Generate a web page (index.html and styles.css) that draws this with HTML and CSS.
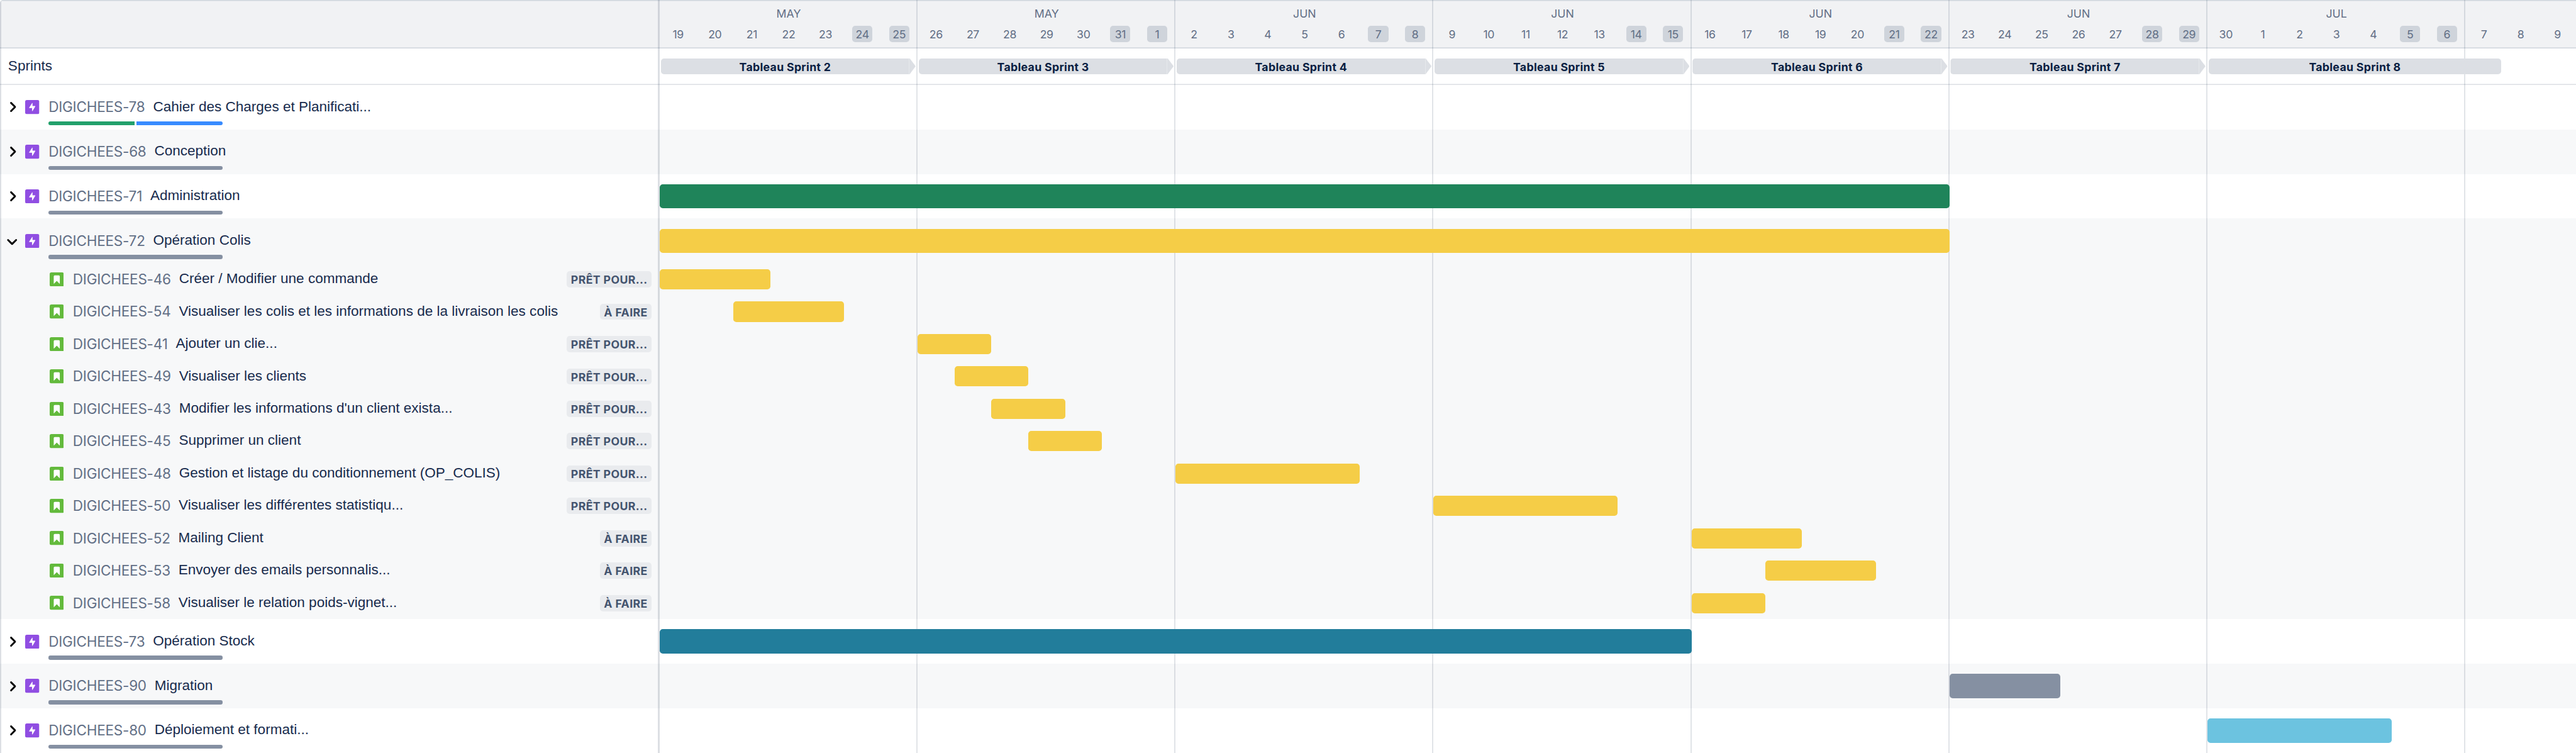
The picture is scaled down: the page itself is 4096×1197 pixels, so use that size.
FILE: index.html
```
<!DOCTYPE html>
<html lang="fr">
<head>
<meta charset="utf-8">
<title>Chronologie</title>
<link rel="stylesheet" href="styles.css">
</head>
<body>
<svg class="sprite" aria-hidden="true">
  <symbol id="epic" viewBox="0 0 14 14"><rect width="14" height="14" rx="1.700" fill="#904ee2"/><path d="M7.300 3.300v2.600h2.300c.4 0 .5.300.3.600L7.400 10.700c-.2.300-.6.300-.6-.1V8H4.300c-.4 0-.5-.300-.3-.600L6.700 3.200c.2-.3.600-.3.600.1z" fill="#fff"/></symbol>
  <symbol id="story" viewBox="0 0 14 14"><rect width="14" height="14" rx="1.700" fill="#63ba3c"/><path d="M4 10.900V4a1 1 0 0 1 1-1h4a1 1 0 0 1 1 1v6.900c0 .300-.2.300-.4.100L7 8.400 4.400 11c-.2.200-.4.200-.4-.1z" fill="#fff"/></symbol>
  <symbol id="chevron" viewBox="0 0 6 10"><path d="M1 1l4 4-4 4" fill="none" stroke="#000" stroke-width="1.800" stroke-linecap="round" stroke-linejoin="round"/></symbol>
</svg>
<main class="roadmap">
  <div class="lines"><i></i><i></i><i></i><i></i><i></i><i></i><i></i><i></i></div>
  <header class="row head">
    <div class="side"></div>
    <div class="weeks">
      <div class="week"><span class="month">MAY</span><div class="days"><b>19</b><b>20</b><b>21</b><b>22</b><b>23</b><b class="off">24</b><b class="off">25</b></div></div>
      <div class="week"><span class="month">MAY</span><div class="days"><b>26</b><b>27</b><b>28</b><b>29</b><b>30</b><b class="off">31</b><b class="off">1</b></div></div>
      <div class="week"><span class="month">JUN</span><div class="days"><b>2</b><b>3</b><b>4</b><b>5</b><b>6</b><b class="off">7</b><b class="off">8</b></div></div>
      <div class="week"><span class="month">JUN</span><div class="days"><b>9</b><b>10</b><b>11</b><b>12</b><b>13</b><b class="off">14</b><b class="off">15</b></div></div>
      <div class="week"><span class="month">JUN</span><div class="days"><b>16</b><b>17</b><b>18</b><b>19</b><b>20</b><b class="off">21</b><b class="off">22</b></div></div>
      <div class="week"><span class="month">JUN</span><div class="days"><b>23</b><b>24</b><b>25</b><b>26</b><b>27</b><b class="off">28</b><b class="off">29</b></div></div>
      <div class="week"><span class="month">JUL</span><div class="days"><b>30</b><b>1</b><b>2</b><b>3</b><b>4</b><b class="off">5</b><b class="off">6</b></div></div>
      <div class="week short"><span class="month"></span><div class="days"><b>7</b><b>8</b><b>9</b></div></div>
    </div>
  </header>
  <div class="row sprints">
    <div class="side">Sprints</div>
    <div class="track">
      <div class="sprint" style="grid-column:1/8"><span>Tableau Sprint 2</span></div>
      <div class="sprint" style="grid-column:8/15"><span>Tableau Sprint 3</span></div>
      <div class="sprint" style="grid-column:15/22"><span>Tableau Sprint 4</span></div>
      <div class="sprint" style="grid-column:22/29"><span>Tableau Sprint 5</span></div>
      <div class="sprint" style="grid-column:29/36"><span>Tableau Sprint 6</span></div>
      <div class="sprint" style="grid-column:36/43"><span>Tableau Sprint 7</span></div>
      <div class="sprint open" style="grid-column:43/51"><span>Tableau Sprint 8</span></div>
    </div>
  </div>

  <div class="row epic">
    <div class="side"><svg class="chev"><use href="#chevron"/></svg><svg class="icon"><use href="#epic"/></svg><span class="key">DIGICHEES-78</span><span class="title">Cahier des Charges et Planificati...</span><div class="progress"><i class="done"></i><i class="doing"></i></div></div>
    <div class="track"></div>
  </div>
  <div class="row epic alt">
    <div class="side"><svg class="chev"><use href="#chevron"/></svg><svg class="icon"><use href="#epic"/></svg><span class="key">DIGICHEES-68</span><span class="title">Conception</span><div class="progress"><i></i></div></div>
    <div class="track"></div>
  </div>
  <div class="row epic">
    <div class="side"><svg class="chev"><use href="#chevron"/></svg><svg class="icon"><use href="#epic"/></svg><span class="key">DIGICHEES-71</span><span class="title">Administration</span><div class="progress"><i></i></div></div>
    <div class="track"><div class="bar green" style="grid-column:1/36"></div></div>
  </div>
  <div class="row epic alt">
    <div class="side"><svg class="chev down"><use href="#chevron"/></svg><svg class="icon"><use href="#epic"/></svg><span class="key">DIGICHEES-72</span><span class="title">Opération Colis</span><div class="progress"><i></i></div></div>
    <div class="track"><div class="bar yellow" style="grid-column:1/36"></div></div>
  </div>
  <div class="row story alt">
    <div class="side"><svg class="icon"><use href="#story"/></svg><span class="key">DIGICHEES-46</span><span class="title">Créer / Modifier une commande</span><span class="status">PRÊT POUR...</span></div>
    <div class="track"><div class="bar yellow" style="grid-column:1/4"></div></div>
  </div>
  <div class="row story alt">
    <div class="side"><svg class="icon"><use href="#story"/></svg><span class="key">DIGICHEES-54</span><span class="title">Visualiser les colis et les informations de la livraison les colis</span><span class="status">À FAIRE</span></div>
    <div class="track"><div class="bar yellow" style="grid-column:3/6"></div></div>
  </div>
  <div class="row story alt">
    <div class="side"><svg class="icon"><use href="#story"/></svg><span class="key">DIGICHEES-41</span><span class="title">Ajouter un clie...</span><span class="status">PRÊT POUR...</span></div>
    <div class="track"><div class="bar yellow" style="grid-column:8/10"></div></div>
  </div>
  <div class="row story alt">
    <div class="side"><svg class="icon"><use href="#story"/></svg><span class="key">DIGICHEES-49</span><span class="title">Visualiser les clients</span><span class="status">PRÊT POUR...</span></div>
    <div class="track"><div class="bar yellow" style="grid-column:9/11"></div></div>
  </div>
  <div class="row story alt">
    <div class="side"><svg class="icon"><use href="#story"/></svg><span class="key">DIGICHEES-43</span><span class="title">Modifier les informations d'un client exista...</span><span class="status">PRÊT POUR...</span></div>
    <div class="track"><div class="bar yellow" style="grid-column:10/12"></div></div>
  </div>
  <div class="row story alt">
    <div class="side"><svg class="icon"><use href="#story"/></svg><span class="key">DIGICHEES-45</span><span class="title">Supprimer un client</span><span class="status">PRÊT POUR...</span></div>
    <div class="track"><div class="bar yellow" style="grid-column:11/13"></div></div>
  </div>
  <div class="row story alt">
    <div class="side"><svg class="icon"><use href="#story"/></svg><span class="key">DIGICHEES-48</span><span class="title">Gestion et listage du conditionnement (OP_COLIS)</span><span class="status">PRÊT POUR...</span></div>
    <div class="track"><div class="bar yellow" style="grid-column:15/20"></div></div>
  </div>
  <div class="row story alt">
    <div class="side"><svg class="icon"><use href="#story"/></svg><span class="key">DIGICHEES-50</span><span class="title">Visualiser les différentes statistiqu...</span><span class="status">PRÊT POUR...</span></div>
    <div class="track"><div class="bar yellow" style="grid-column:22/27"></div></div>
  </div>
  <div class="row story alt">
    <div class="side"><svg class="icon"><use href="#story"/></svg><span class="key">DIGICHEES-52</span><span class="title">Mailing Client</span><span class="status">À FAIRE</span></div>
    <div class="track"><div class="bar yellow" style="grid-column:29/32"></div></div>
  </div>
  <div class="row story alt">
    <div class="side"><svg class="icon"><use href="#story"/></svg><span class="key">DIGICHEES-53</span><span class="title">Envoyer des emails personnalis...</span><span class="status">À FAIRE</span></div>
    <div class="track"><div class="bar yellow" style="grid-column:31/34"></div></div>
  </div>
  <div class="row story alt">
    <div class="side"><svg class="icon"><use href="#story"/></svg><span class="key">DIGICHEES-58</span><span class="title">Visualiser le relation poids-vignet...</span><span class="status">À FAIRE</span></div>
    <div class="track"><div class="bar yellow" style="grid-column:29/31"></div></div>
  </div>
  <div class="row epic">
    <div class="side"><svg class="chev"><use href="#chevron"/></svg><svg class="icon"><use href="#epic"/></svg><span class="key">DIGICHEES-73</span><span class="title">Opération Stock</span><div class="progress"><i></i></div></div>
    <div class="track"><div class="bar teal" style="grid-column:1/29"></div></div>
  </div>
  <div class="row epic alt">
    <div class="side"><svg class="chev"><use href="#chevron"/></svg><svg class="icon"><use href="#epic"/></svg><span class="key">DIGICHEES-90</span><span class="title">Migration</span><div class="progress"><i></i></div></div>
    <div class="track"><div class="bar grey" style="grid-column:36/39"></div></div>
  </div>
  <div class="row epic">
    <div class="side"><svg class="chev"><use href="#chevron"/></svg><svg class="icon"><use href="#epic"/></svg><span class="key">DIGICHEES-80</span><span class="title">Déploiement et formati...</span><div class="progress"><i></i></div></div>
    <div class="track"><div class="bar sky" style="grid-column:43/48"></div></div>
  </div>
</main>
</body>
</html>
```
FILE: styles.css
```
/* 0.1rem is one design pixel */
html { font-size: 16.088px; }
* { box-sizing: border-box; }
body {
  margin: 0;
  background: #fff;
  color: #172b4d;
  font-family: Inter, "Liberation Sans", sans-serif;
  overflow: hidden;
}
.sprite { position: absolute; width: 0; height: 0; }

.roadmap { position: relative; height: 74.4rem; overflow: hidden; border-radius: .3rem 0 0 0; }
.roadmap::before {
  content: "";
  position: absolute;
  inset: 0 auto 0 0;
  width: .1rem;
  background: rgba(9, 30, 66, .14);
}

.row { display: grid; grid-template-columns: 65.2rem 1fr; background: #fff; }
.alt { background: #f7f8f9; }
.epic { height: 4.4rem; }
.story { height: 3.2rem; }
.head {
  height: 4.8rem;
  background: #f1f2f4;
  box-shadow: inset 0 .1rem #cfd5dc, inset 0 -.1rem #cfd5dc;
}
.sprints { height: 3.6rem; box-shadow: inset 0 -.1rem #dcdfe4; }

/* week separators, behind the bars */
.lines {
  position: absolute;
  inset: 0 0 0 65.2rem;
  display: grid;
  grid-template-columns: repeat(7, 7fr) 3fr;
}
.lines i { border-right: 2px solid rgba(9, 30, 66, .12); }
.lines i:last-child { border: 0; }
.lines::before {
  content: "";
  position: absolute;
  inset: 0 100% 0 -.2rem;
  background: rgba(9, 30, 66, .14);
}

/* header */
.weeks { display: grid; grid-template-columns: repeat(7, 7fr) 3fr; font-size: 1.1rem; color: #626f86; }
.week { display: flex; flex-direction: column; padding-top: .55rem; text-align: center; }
.month { height: 2rem; line-height: 1.6rem; }
.days { display: grid; grid-template-columns: repeat(7, 1fr); justify-items: center; }
.short .days { grid-template-columns: repeat(3, 1fr); }
.days b { width: 2rem; height: 1.6rem; line-height: 1.72rem; font-weight: 400; letter-spacing: -.02em; border-radius: .3rem; }
.off { background: #cfd4db; }

/* left column */
.side { display: flex; align-items: center; min-width: 0; }
.sprints .side { padding: 0 0 .2rem .8rem; font: 1.4rem "Liberation Sans", sans-serif; }
.epic .side {
  display: grid;
  grid-template-columns: .6rem 2.3rem auto 1fr;
  grid-template-rows: 3.6rem .4rem;
  align-content: start;
  align-items: center;
  padding-left: 1rem;
}
.epic .icon { margin-left: .9rem; }
.epic .chev, .epic .icon, .epic .key, .epic .title { position: relative; top: .4rem; }
.chev { width: .6rem; height: 1rem; overflow: visible; }
.down { transform: translate(-.1rem, .1rem) rotate(90deg); }
.icon { width: 1.4rem; height: 1.4rem; flex: none; }
.key { margin-left: .9rem; font-size: 1.4rem; line-height: 2rem; color: #626f86; letter-spacing: -.01em; }
.title {
  margin-left: .8rem;
  padding-bottom: .1rem;
  font: 1.4rem/2rem "Liberation Sans", sans-serif;
  white-space: nowrap;
}
.progress { grid-column: 1 / -1; display: flex; gap: .2rem; width: 17.2rem; height: .4rem; margin-left: 3.8rem; border-radius: .2rem; overflow: hidden; }
.progress i { flex: 1; background: #8590a2; }
.progress .done { background: #22a06b; }
.progress .doing { background: #388bff; }

.story .side { padding: 0 .8rem 0 4.9rem; }
.status {
  margin-left: auto;
  height: 1.6rem;
  padding: 0 .4rem;
  border-radius: .3rem;
  background: #e9ebee;
  color: #44546f;
  font-size: 1.1rem;
  font-weight: 700;
  line-height: 1.68rem;
  letter-spacing: .022em;
  white-space: nowrap;
}

/* timeline */
.track { position: relative; display: grid; grid-template-columns: repeat(52, 1fr); align-items: center; }
.bar { height: 2.4rem; border-radius: .3rem; }
.story .bar { height: 2rem; }
.green { background: #1f845a; }
.yellow { background: #f5cd47; }
.teal { background: #227d9b; }
.grey { background: #8590a2; }
.sky { background: #6cc3e0; }
.sprint {
  height: 1.6rem;
  margin: 0 .2rem .1rem .1rem;
  padding-right: .6rem;
  border-radius: .3rem 0 0 .3rem;
  background: linear-gradient(#e6e9ec, #e6e9ec) right .6rem top / 1px 100% no-repeat #dcdfe4;
  color: #091e42;
  font-size: 1.1rem;
  font-weight: 700;
  line-height: 1.72rem;
  letter-spacing: .018em;
  text-align: center;
  clip-path: polygon(0 0, calc(100% - .6rem) 0, 100% 50%, calc(100% - .6rem) 100%, 0 100%);
}
.open { margin-right: .1rem; padding: 0; border-radius: .3rem; background: #dcdfe4; clip-path: none; }
```
